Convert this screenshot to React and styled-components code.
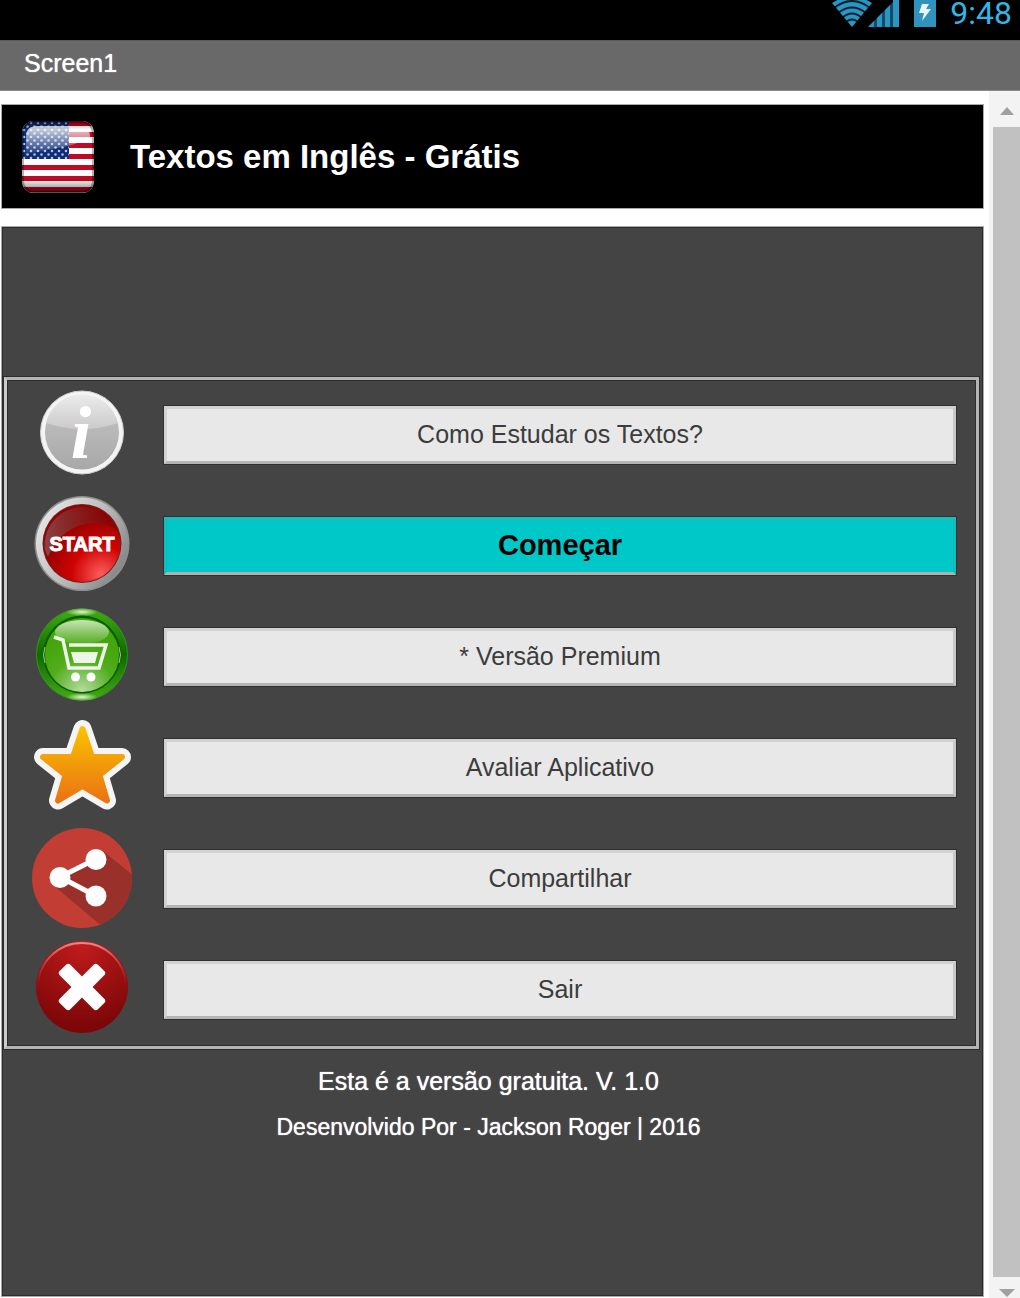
import React from "react";
import styled, { createGlobalStyle } from "styled-components";

const GlobalStyle = createGlobalStyle`
  * {
    box-sizing: border-box;
  }

  body {
    margin: 0;
    background: #fff;
    font-family: "Liberation Sans", Arial, sans-serif;
  }
`;

const Screen = styled.div`
  display: flex;
  flex-direction: column;
  min-height: 100vh;
`;

const StatusBar = styled.div`
  display: flex;
  justify-content: flex-end;
  gap: 14px;
  height: 40px;
  padding-right: 8px;
  background: #000;
  color: #33b5e5;
`;

const Clock = styled.span`
  font-family: Roboto, sans-serif;
  font-size: 32px;
  line-height: 26px;
`;

const TitleBar = styled.header`
  height: 51px;
  padding-left: 24px;
  background: #696969;
  border-top: 1px solid #5a5a5a;
  border-bottom: 1px solid #8a8a8a;
  color: #fff;
  font-size: 25px;
  line-height: 44px;
  text-shadow: 0 0 1px #fff;
`;

const Body = styled.div`
  flex: 1;
  display: grid;
  grid-template-columns: 1fr 31px;
`;

const Content = styled.main`
  display: flex;
  flex-direction: column;
  gap: 17px;
  padding: 13px 5px 1px 1px;
`;

const Banner = styled.div`
  display: flex;
  align-items: center;
  gap: 36px;
  height: 105px;
  padding: 0 20px;
  background: #000;
  border: 1px solid #aaa;
`;

const Title = styled.h1`
  margin: 0;
  color: #fff;
  font-size: 33px;
  line-height: 40px;
`;

const Panel = styled.div`
  flex: 1;
  padding: 150px 4px 32px 2px;
  background: #444;
  border: 1px solid #aaa;
  box-shadow: inset 0 0 0 1px #2c2c2c;
`;

const Menu = styled.ul`
  margin: 0;
  padding: 0;
  list-style: none;
  border: 3px solid #b4b4b4;
  border-left-color: #ccc;
  box-shadow: 0 0 0 1px #2c2c2c, inset 0 0 0 1px #2c2c2c;
`;

const Row = styled.li`
  display: flex;
  align-items: center;
  gap: 32px;
  height: 111px;
  padding: 0 20px 2px 25px;
`;

const Icon = styled.svg`
  flex: none;
  width: 100px;
  height: 100px;
  margin-bottom: 2px;
`;

const Button = styled.button`
  flex: 1;
  height: 58px;
  padding: 0;
  background: ${(props) => (props.$primary ? "#00c8c8" : "#e8e8e8")};
  border: 3px solid;
  border-color: ${(props) =>
    props.$primary
      ? "#1cbcbc #12bcbc #b0b0b0 #12bcbc"
      : "#d2d2d2 #c8c8c8 #b4b4b4 #d2d2d2"};
  box-shadow: 0 0 0 1px #303030;
  color: ${(props) => (props.$primary ? "#000" : "#3c3c3c")};
  font-family: inherit;
  font-size: ${(props) => (props.$primary ? "29px" : "25px")};
  font-weight: ${(props) => (props.$primary ? "bold" : "normal")};
  cursor: pointer;
`;

const Footer = styled.footer`
  display: flex;
  flex-direction: column;
  gap: 14px;
  padding: 16px 6px 0 0;
  color: #fff;
  text-align: center;
`;

const Note = styled.p`
  margin: 0;
  font-size: ${(props) => (props.$small ? "23px" : "25px")};
  line-height: 32px;
  text-shadow: 0 0 1px #fff;
`;

const ScrollBar = styled.div`
  display: flex;
  flex-direction: column;
  padding-left: 4px;
  background: #f3f3f3;
`;

const ScrollEnd = styled.div`
  display: flex;
  justify-content: center;
  height: ${(props) => (props.$down ? "21px" : "36px")};
  padding-top: ${(props) => (props.$down ? "12px" : "16px")};
  overflow: hidden;
`;

const Thumb = styled.div`
  flex: 1;
  background: #c1c1c1;
`;

const StatusIcons = () => (
  <>
    <svg width="68" height="40" viewBox="0 0 68 40" aria-hidden="true">
      <path d="M0 3 Q20 -10 40 3 L20 27 Z" fill="#2b95c4" />
      <g fill="none" stroke="#000" strokeOpacity="0.8" strokeWidth="2">
        <path d="M2 8 Q20 -6 38 8" />
        <path d="M6 13 Q20 2 34 13" />
        <path d="M10 18 Q20 9 30 18" />
        <path d="M13 23 Q20 16 27 23" />
      </g>
      <path d="M36 27 L67 -4 V27 Z" fill="#2b95c4" opacity="0.5" />
      <path d="M36 27 L42 21 V27 Z M45 18 L50 13 V27 H45 Z M53 10 L58 5 V27 H53 Z M61 0 H67 V27 H61 Z" fill="#2b95c4" />
    </svg>
    <svg width="22" height="40" viewBox="0 0 22 40" aria-hidden="true">
      <path d="M0 0 H22 V27 H0 Z" fill="#2f93bd" />
      <path d="M8 4 H15 L12 9 H17 L8 21 L10 13 H5 Z" fill="#e8f4f8" />
    </svg>
  </>
);

const stripes = [0, 11, 22, 33, 44, 55, 66];

const Flag = () => (
  <svg width="72" height="72" viewBox="0 0 72 72" role="img" aria-label="USA">
    <defs>
      <clipPath id="flagClip">
        <rect width="72" height="72" rx="12" />
      </clipPath>
      <pattern id="stars" width="7" height="7" patternUnits="userSpaceOnUse">
        <circle cx="2" cy="2" r="1.3" fill="#fff" />
        <circle cx="5.5" cy="5.5" r="1.3" fill="#fff" />
      </pattern>
      <linearGradient id="flagGloss" x1="0" y1="0" x2="0" y2="1">
        <stop offset="0" stopColor="#fff" stopOpacity="0.85" />
        <stop offset="1" stopColor="#fff" stopOpacity="0.05" />
      </linearGradient>
      <linearGradient id="flagShade" x1="0" y1="0" x2="0" y2="1">
        <stop offset="0" stopColor="#000" stopOpacity="0.4" />
        <stop offset="0.12" stopColor="#000" stopOpacity="0" />
        <stop offset="0.8" stopColor="#000" stopOpacity="0" />
        <stop offset="1" stopColor="#000" stopOpacity="0.55" />
      </linearGradient>
    </defs>
    <g clipPath="url(#flagClip)">
      <rect width="72" height="72" fill="#fff" />
      {stripes.map((y) => (
        <rect key={y} y={y} width="72" height="5" fill="#bf0a24" />
      ))}
      <rect width="47" height="38" fill="#0c2c78" />
      <rect width="47" height="38" fill="url(#stars)" opacity="0.7" />
      <path d="M4 16 Q4 5 15 5 H57 Q68 5 68 16 Q55 24 36 27 Q15 31 4 33 Z" fill="url(#flagGloss)" />
      <rect width="72" height="72" fill="url(#flagShade)" />
      <rect x="1" y="1" width="70" height="70" rx="11" fill="none" stroke="#000" strokeOpacity="0.3" strokeWidth="2" />
    </g>
  </svg>
);

const InfoIcon = () => (
  <Icon viewBox="0 0 100 100" aria-hidden="true">
    <defs>
      <linearGradient id="infoFill" x1="0" y1="0" x2="0" y2="1">
        <stop offset="0" stopColor="#c8c8c8" />
        <stop offset="0.4" stopColor="#bababa" />
        <stop offset="1" stopColor="#a8a8a8" />
      </linearGradient>
      <linearGradient id="infoGloss" x1="0" y1="0" x2="0" y2="1">
        <stop offset="0" stopColor="#ececec" />
        <stop offset="1" stopColor="#cccaca" />
      </linearGradient>
    </defs>
    <circle cx="50" cy="48.5" r="41.5" fill="#f4f4f4" />
    <circle cx="50" cy="48.5" r="37" fill="url(#infoFill)" />
    <path d="M14 39 A37 37 0 0 1 86 39 Q50 51 14 39 Z" fill="url(#infoGloss)" />
    <circle cx="50" cy="48.5" r="41.5" fill="none" stroke="#d0d0d0" />
    <text x="49" y="74" textAnchor="middle" fill="#fff" fontFamily="Liberation Serif, serif" fontSize="74" fontWeight="bold" fontStyle="italic">
      i
    </text>
  </Icon>
);

const StartIcon = () => (
  <Icon viewBox="0 0 100 100" aria-hidden="true">
    <defs>
      <linearGradient id="startRing" x1="0" y1="0.2" x2="1" y2="0.8">
        <stop offset="0" stopColor="#e8e8e8" />
        <stop offset="0.5" stopColor="#bdbdbd" />
        <stop offset="1" stopColor="#808080" />
      </linearGradient>
      <radialGradient id="startFill" cx="0.75" cy="0.9" r="0.75">
        <stop offset="0" stopColor="#ff5c5c" />
        <stop offset="0.5" stopColor="#cf0404" />
        <stop offset="1" stopColor="#960000" />
      </radialGradient>
      <linearGradient id="startGloss" x1="0" y1="0.5" x2="1" y2="0.4">
        <stop offset="0" stopColor="#8a4848" stopOpacity="0.9" />
        <stop offset="1" stopColor="#7c0000" stopOpacity="0.6" />
      </linearGradient>
    </defs>
    <circle cx="50" cy="48.5" r="47.5" fill="#8e8e8e" />
    <circle cx="50" cy="48.5" r="46" fill="url(#startRing)" />
    <circle cx="50" cy="48.5" r="39.5" fill="#6e2020" />
    <circle cx="50" cy="48.5" r="38.5" fill="url(#startFill)" />
    <path d="M13 55 A38 38 0 0 1 86 36 Q72 25 53 29 Q27 35 16 62 Z" fill="url(#startGloss)" />
    <text x="50" y="56" textAnchor="middle" fill="#fff" stroke="#fff" strokeWidth="1" fontFamily="Liberation Sans, sans-serif" fontSize="20" fontWeight="bold">
      START
    </text>
  </Icon>
);

const CartIcon = () => (
  <Icon viewBox="0 0 100 100" aria-hidden="true">
    <defs>
      <linearGradient id="cartRing" x1="0" y1="0" x2="0" y2="1">
        <stop offset="0" stopColor="#44ad12" />
        <stop offset="0.5" stopColor="#0c6a00" />
        <stop offset="1" stopColor="#44ad12" />
      </linearGradient>
      <radialGradient id="cartFill" cx="0.5" cy="1" r="0.75">
        <stop offset="0" stopColor="#b8dda4" />
        <stop offset="0.6" stopColor="#52ad1c" />
        <stop offset="1" stopColor="#44a60c" />
      </radialGradient>
      <linearGradient id="cartGloss" x1="0" y1="0" x2="0" y2="1">
        <stop offset="0" stopColor="#d4ebc8" stopOpacity="0.9" />
        <stop offset="1" stopColor="#d4ebc8" stopOpacity="0.1" />
      </linearGradient>
      <radialGradient id="cartSpot">
        <stop offset="0" stopColor="#dff5cd" />
        <stop offset="1" stopColor="#dff5cd" stopOpacity="0" />
      </radialGradient>
    </defs>
    <circle cx="50" cy="48.5" r="46" fill="url(#cartRing)" />
    <circle cx="50" cy="48.5" r="45.5" fill="none" stroke="#3c8c2c" />
    <ellipse cx="50" cy="6" rx="16" ry="4" fill="url(#cartSpot)" />
    <ellipse cx="50" cy="91" rx="16" ry="4" fill="url(#cartSpot)" />
    <circle cx="50" cy="48.5" r="39" fill="#086000" />
    <circle cx="50" cy="49" r="37" fill="url(#cartFill)" />
    <path d="M13 41 Q10 49 13 57 M87 41 Q90 49 87 57" fill="none" stroke="#a0c890" strokeWidth="1" />
    <ellipse cx="50" cy="26" rx="27" ry="12" fill="url(#cartGloss)" />
    <path d="M22 31 L31 34 L37 62 H67 L74 39 H37" fill="none" stroke="#eef6e8" strokeWidth="3.5" />
    <path d="M39 46 H66 L63 57 H42 Z" fill="#eef6e8" />
    <circle cx="43.5" cy="71" r="4.5" fill="#fff" />
    <circle cx="59" cy="71" r="4.5" fill="#fff" />
  </Icon>
);

const starPath =
  "M50.5 12 L60 40 L90 40 L67.5 58 L75 83.5 L50.5 69 L26 83.5 L33.5 58 L11 40 L41 40 Z";

const StarIcon = () => (
  <Icon viewBox="0 0 100 100" aria-hidden="true">
    <defs>
      <linearGradient id="starFill" x1="0" y1="0" x2="0" y2="1">
        <stop offset="0" stopColor="#fac000" />
        <stop offset="1" stopColor="#ea7414" />
      </linearGradient>
    </defs>
    <path d={starPath} fill="#f5f5f5" stroke="#f5f5f5" strokeWidth="18" strokeLinejoin="round" />
    <path d={starPath} fill="url(#starFill)" stroke="url(#starFill)" strokeWidth="6" strokeLinejoin="round" />
  </Icon>
);

const ShareIcon = () => (
  <Icon viewBox="0 0 100 100" aria-hidden="true">
    <defs>
      <clipPath id="shareClip">
        <circle cx="50" cy="50" r="50" />
      </clipPath>
    </defs>
    <circle cx="50" cy="50" r="50" fill="#c23d33" />
    <path d="M71 23 L102 48 V100 H72 L20 56 L36 44 Z" fill="#993029" clipPath="url(#shareClip)" />
    <path d="M64 31 L28 49 L64 68" fill="none" stroke="#fff" strokeWidth="5" />
    <circle cx="28" cy="49.5" r="10.5" fill="#fff" />
    <circle cx="64" cy="31.5" r="10.5" fill="#fff" />
    <circle cx="64" cy="68" r="10.5" fill="#fff" />
  </Icon>
);

const CloseIcon = () => (
  <Icon viewBox="0 0 100 100" aria-hidden="true">
    <defs>
      <radialGradient id="closeFill" cx="0.5" cy="0.05" r="0.9">
        <stop offset="0" stopColor="#c01c1c" />
        <stop offset="1" stopColor="#7c0608" />
      </radialGradient>
      <linearGradient id="closeRim" x1="0" y1="0" x2="0" y2="1">
        <stop offset="0" stopColor="#f08484" />
        <stop offset="0.5" stopColor="#c03030" stopOpacity="0" />
      </linearGradient>
    </defs>
    <circle cx="50" cy="48" r="46" fill="url(#closeFill)" />
    <circle cx="50" cy="48" r="44" fill="none" stroke="url(#closeRim)" strokeWidth="2" />
    <g fill="#fff">
      <rect x="23" y="40.5" width="54" height="15" rx="3" transform="rotate(45 50 48)" />
      <rect x="23" y="40.5" width="54" height="15" rx="3" transform="rotate(-45 50 48)" />
    </g>
  </Icon>
);

const items = [
  { label: "Como Estudar os Textos?", icon: InfoIcon },
  { label: "Começar", icon: StartIcon, primary: true },
  { label: "* Versão Premium", icon: CartIcon },
  { label: "Avaliar Aplicativo", icon: StarIcon },
  { label: "Compartilhar", icon: ShareIcon },
  { label: "Sair", icon: CloseIcon },
];

const App = () => {
  return (
    <Screen>
      <GlobalStyle />
      <StatusBar>
        <StatusIcons />
        <Clock>9:48</Clock>
      </StatusBar>
      <TitleBar>Screen1</TitleBar>

      <Body>
        <Content>
          <Banner>
            <Flag />
            <Title>Textos em Inglês - Grátis</Title>
          </Banner>

          <Panel>
            <Menu>
              {items.map(({ label, icon: ItemIcon, primary }) => (
                <Row key={label}>
                  <ItemIcon />
                  <Button type="button" $primary={primary}>
                    {label}
                  </Button>
                </Row>
              ))}
            </Menu>

            <Footer>
              <Note>Esta é a versão gratuita. V. 1.0</Note>
              <Note $small>Desenvolvido Por - Jackson Roger | 2016</Note>
            </Footer>
          </Panel>
        </Content>

        <ScrollBar aria-hidden="true">
          <ScrollEnd>
            <svg width="14" height="8" viewBox="0 0 14 8">
              <path d="M0 8 L7 0 L14 8 Z" fill="#a0a0a0" />
            </svg>
          </ScrollEnd>
          <Thumb />
          <ScrollEnd $down>
            <svg width="16" height="8" viewBox="0 0 16 8">
              <path d="M0 0 H16 L8 8 Z" fill="#a0a0a0" />
            </svg>
          </ScrollEnd>
        </ScrollBar>
      </Body>
    </Screen>
  );
};

export default App;
